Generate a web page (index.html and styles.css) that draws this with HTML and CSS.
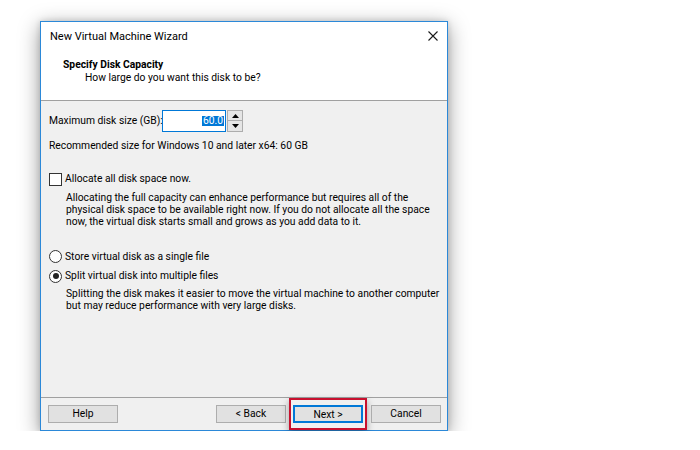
FILE: index.html
```html
<!DOCTYPE html>
<html>
<head>
<meta charset="utf-8">
<link rel="stylesheet" href="styles.css">
</head>
<body>
<div class="dialog">
  <div class="titlebar">
    <span class="title">New Virtual Machine Wizard</span>
    <svg class="close" width="10" height="10" viewBox="0 0 10 10"><path d="M0.5 0.5 L9.5 9.5 M9.5 0.5 L0.5 9.5" stroke="#1a1a1a" stroke-width="1.1" fill="none"/></svg>
  </div>
  <div class="header">
    <div class="h-title">Specify Disk Capacity</div>
    <div class="h-sub">How large do you want this disk to be?</div>
  </div>
  <div class="body">
    <div class="size-row">
      <span class="label">Maximum disk size (GB):</span>
      <div class="spin">
        <div class="spin-input"><span class="sel">60.0</span></div>
        <div class="spin-btns">
          <div class="sb"><svg width="7" height="4" viewBox="0 0 7 4"><path d="M3.5 0 L7 4 L0 4 Z" fill="#000"/></svg></div>
          <div class="sb"><svg width="7" height="4" viewBox="0 0 7 4"><path d="M0 0 L7 0 L3.5 4 Z" fill="#000"/></svg></div>
        </div>
      </div>
    </div>
    <div class="rec">Recommended size for Windows 10 and later x64: 60 GB</div>
    <div class="check-row"><span class="checkbox"></span><span>Allocate all disk space now.</span></div>
    <p class="desc desc1">Allocating the full capacity can enhance performance but requires all of the<br>physical disk space to be available right now. If you do not allocate all the space<br>now, the virtual disk starts small and grows as you add data to it.</p>
    <div class="radio-row r1"><span class="radio"></span><span>Store virtual disk as a single file</span></div>
    <div class="radio-row r2"><span class="radio on"></span><span>Split virtual disk into multiple files</span></div>
    <p class="desc desc2">Splitting the disk makes it easier to move the virtual machine to another computer<br>but may reduce performance with very large disks.</p>
  </div>
  <div class="footer">
    <button class="btn help">Help</button>
    <button class="btn back">&lt; Back</button>
    <button class="btn next">Next &gt;<span class="highlight"></span></button>
    <button class="btn cancel">Cancel</button>
  </div>
</div>
</body>
</html>
```
FILE: styles.css
```css
* { box-sizing: border-box; }
html, body { margin: 0; padding: 0; background: #ffffff; }
body {
  font-family: Roboto, "Noto Sans", "Liberation Sans", sans-serif;
  font-size: 10.3px;
  letter-spacing: 0;
  color: #000;
  padding: 21px 0 0 40px;
}
.dialog {
  width: 408px;
  height: 410px;
  border: 1px solid #2b88d8;
  background: #fff;
  box-shadow: 0 5px 20px rgba(0,0,0,0.4), 0 0 6px rgba(0,0,0,0.15);
  display: flex;
  flex-direction: column;
}
.titlebar {
  height: 28px;
  display: flex;
  align-items: center;
  justify-content: space-between;
  padding: 0 9px 0 9px;
}
.title { font-size: 11px; color: #000; }
.close { display: block; }
.header {
  height: 51px;
  border-bottom: 1px solid #a0a0a0;
  padding: 7.5px 0 0 22px;
  line-height: 13px;
}
.h-title { font-weight: bold; }
.h-sub { padding-left: 22px; }
.body {
  height: 296px;
  background: #f0f0f0;
  padding: 9px 0 0 8px;
  line-height: 12.4px;
}
.size-row {
  display: flex;
  align-items: center;
  height: 22px;
}
.label { width: 113px; white-space: nowrap; }
.spin { display: flex; height: 22px; }
.spin-input {
  width: 64px;
  height: 22px;
  background: #fff;
  border: 1px solid #0078d7;
  display: flex;
  align-items: center;
  justify-content: flex-end;
  padding-right: 1px;
}
.sel {
  background: #0078d7;
  color: #fff;
  line-height: 10px;
  height: 10px;
  padding: 0 1px;
}
.spin-btns {
  margin-left: 1px;
  width: 16px;
  display: flex;
  flex-direction: column;
}
.sb {
  height: 11px;
  background: #e5e5e5;
  border: 1px solid #adadad;
  display: flex;
  align-items: center;
  justify-content: center;
}
.sb + .sb { border-top: 0; }
.sb svg { display: block; }
.rec { margin-top: 7px; line-height: 13px; }
.check-row, .radio-row {
  display: flex;
  align-items: center;
  height: 13px;
  gap: 3px;
}
.check-row { margin-top: 21px; }
.checkbox {
  width: 13px;
  height: 13px;
  background: #fff;
  border: 1px solid #333;
  flex: none;
}
.radio {
  width: 13px;
  height: 13px;
  border-radius: 50%;
  background: #fff;
  border: 1px solid #333;
  flex: none;
  display: flex;
  align-items: center;
  justify-content: center;
}
.radio.on::after {
  content: "";
  width: 6px;
  height: 6px;
  border-radius: 50%;
  background: #222;
}
.desc { margin: 0; padding-left: 17px; white-space: nowrap; }
.desc1 { margin-top: 5.5px; }
.r1 { margin-top: 21.5px; }
.r2 { margin-top: 6.5px; }
.desc2 { margin-top: 5px; }
.footer {
  flex: 1;
  background: #f0f0f0;
  border-top: 1px solid #a0a0a0;
  display: flex;
  align-items: flex-start;
  padding: 7px 6px 0 7px;
}
.btn {
  font-family: inherit;
  font-size: 10.3px;
  color: #000;
  width: 70px;
  height: 18px;
  background: #e1e1e1;
  border: 1px solid #adadad;
  padding: 0;
  margin: 0;
  line-height: 16px;
  position: relative;
}
.back { margin-left: auto; }
.next { margin-left: 7px; border: 2px solid #0078d7; }
.cancel { margin-left: 8px; }
.highlight {
  position: absolute;
  left: -6px;
  right: -6px;
  top: -9px;
  bottom: -9px;
  border: 2px solid #c8102e;
  box-shadow: 0 3px 7px rgba(0,0,0,0.35);
}
```
